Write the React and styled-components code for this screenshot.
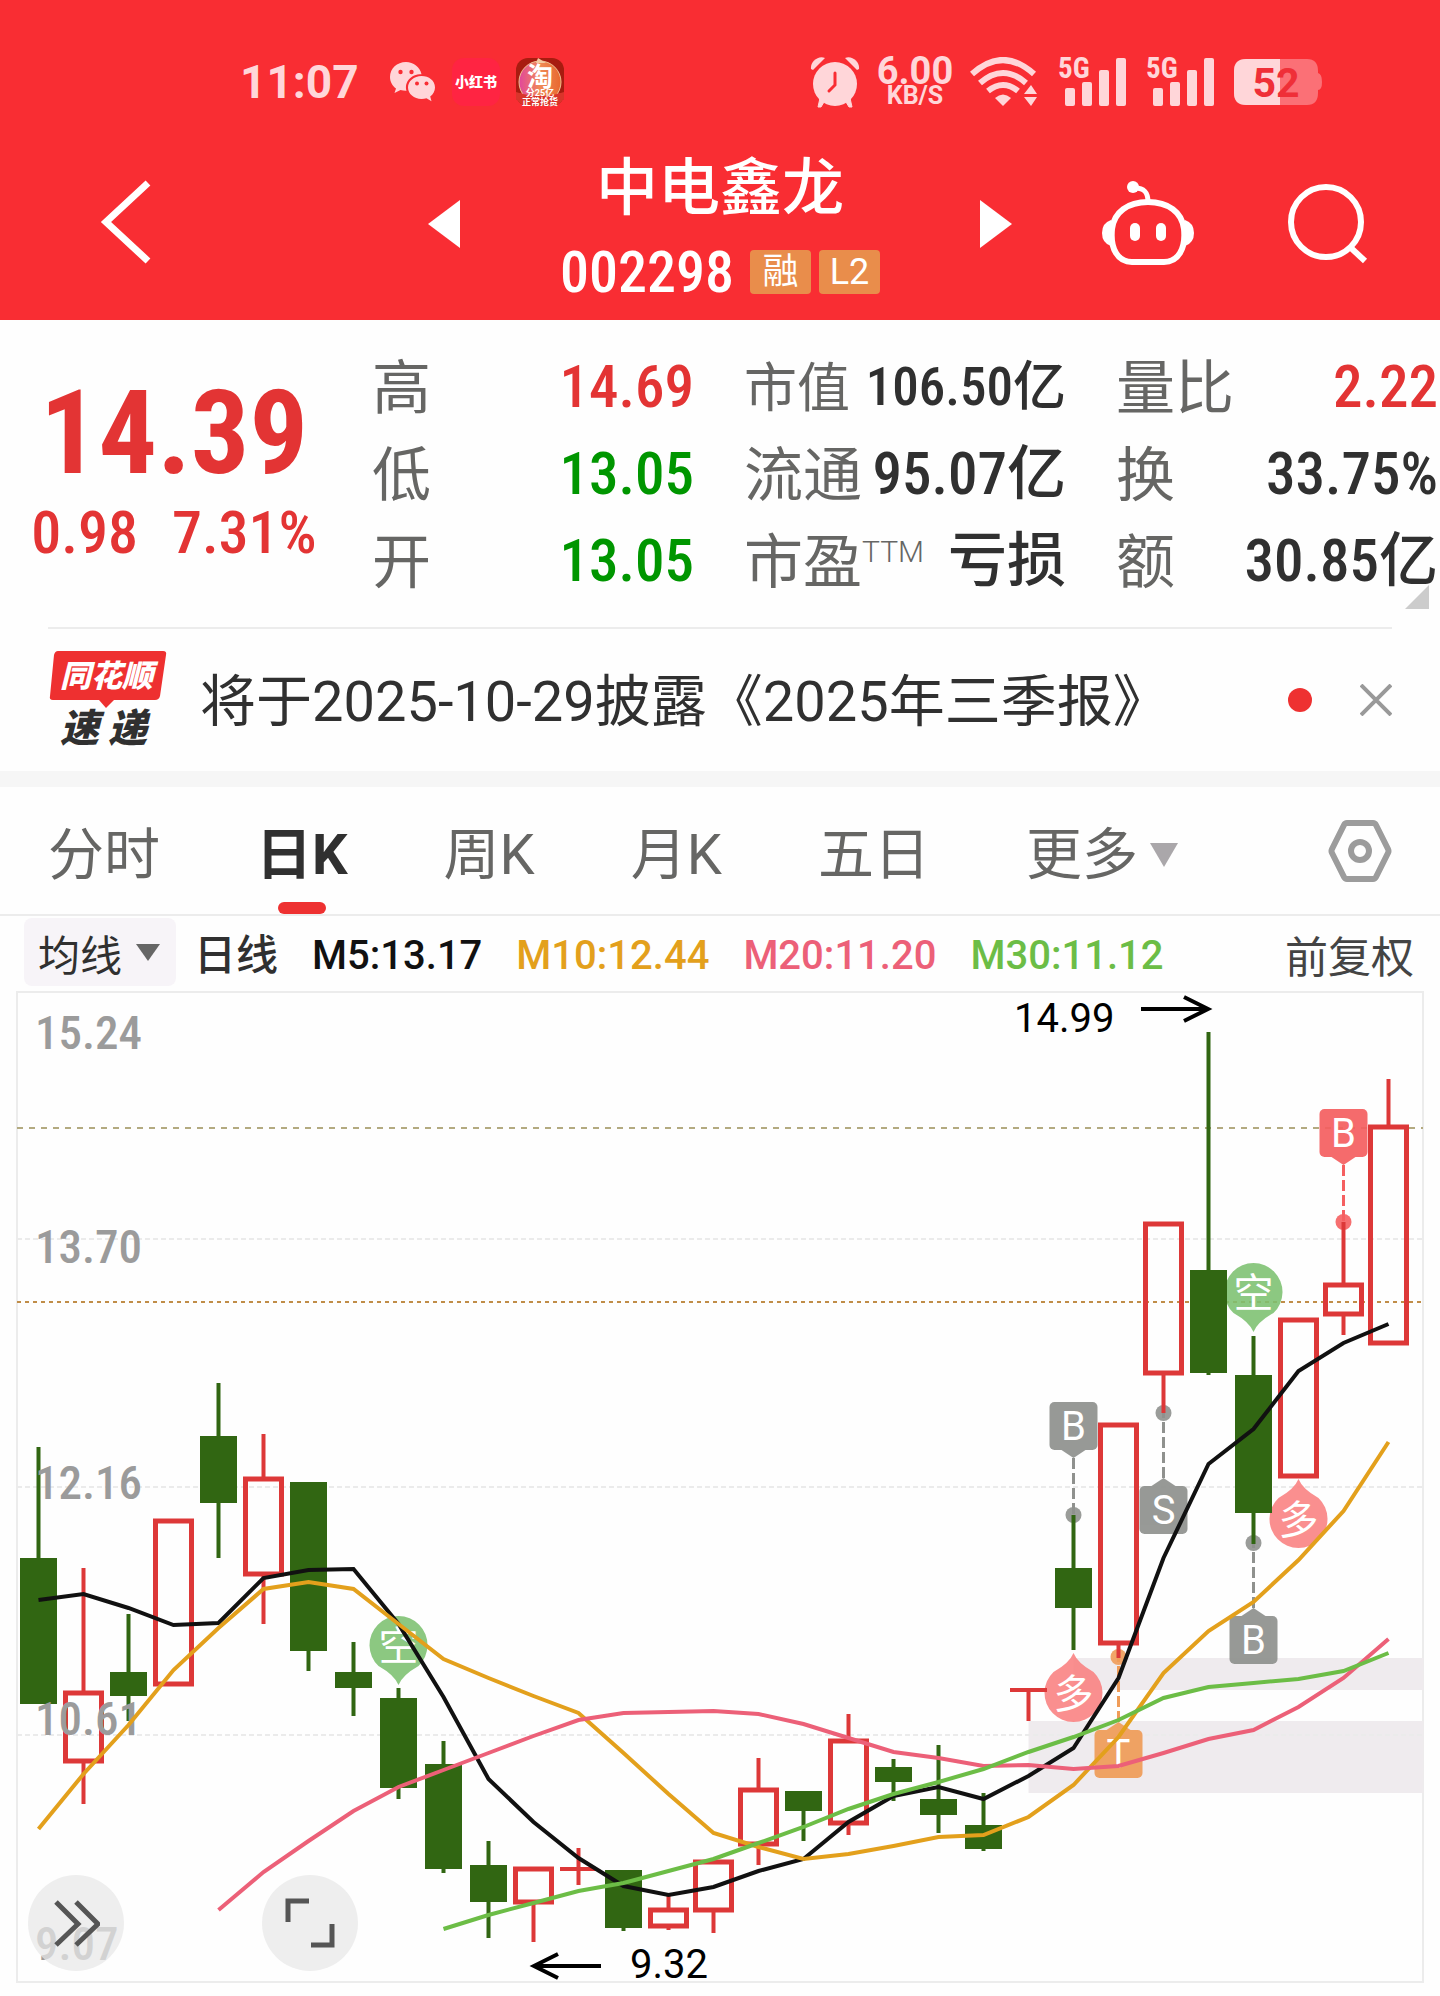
import { useState } from 'react';
import styled, { createGlobalStyle, ThemeProvider } from 'styled-components';

const theme = {
  colors: {
    header: '#f92d33',
    status: '#ffd6d9',
    red: '#e33434',
    green: '#009600',
    text: '#303030',
    label: '#666664',
    line: '#ececec',
    up: '#dd3838',
    down: '#316612',
    ma5: '#111111',
    ma10: '#e3a01c',
    ma20: '#ec6078',
    ma30: '#6cbd46',
  },
  fonts: {
    text: 'Roboto, "Noto Sans CJK SC", sans-serif',
    number: '"Roboto Condensed", Roboto, "Noto Sans CJK SC", sans-serif',
  },
};

const GlobalStyle = createGlobalStyle`
  * {
    box-sizing: border-box;
  }

  body {
    margin: 0;
    background: #fefefe;
    font-family: ${theme.fonts.text};
    color: ${theme.colors.text};
  }

  button {
    padding: 0;
    border: none;
    background: none;
    font-family: inherit;
    color: inherit;
    cursor: pointer;
  }

  svg {
    display: block;
    flex-shrink: 0;
  }
`;

/* ---------- header ---------- */

const Header = styled.header`
  padding: 56px 0 22px;
  background: ${props => props.theme.colors.header};
  color: white;
`;

const StatusBar = styled.div`
  display: flex;
  align-items: center;
  justify-content: space-between;
  height: 52px;
  padding: 0 118px 0 240px;
  color: ${props => props.theme.colors.status};
`;

const StatusGroup = styled.div`
  display: flex;
  align-items: center;
  gap: ${props => props.$gap}px;
`;

const Clock = styled.span`
  width: 134px;
  font-size: 46px;
  line-height: 52px;
  font-weight: 700;
`;

const AppBadge = styled.span`
  width: 48px;
  height: 48px;
  border-radius: 12px;
  background: #ff2442;
  color: white;
  font-size: 14px;
  line-height: 48px;
  font-weight: 900;
  text-align: center;
`;

const Speed = styled.div`
  display: flex;
  flex-direction: column;
  align-items: center;
  width: 80px;
  font-weight: 700;

  .value {
    font-size: 38px;
    line-height: 28px;
  }

  .unit {
    font-size: 25px;
    line-height: 22px;
  }
`;

const NavBar = styled.div`
  display: grid;
  grid-template-columns: 1fr auto 1fr;
  align-items: center;
  margin-top: 42px;
`;

const NavLeft = styled.div`
  display: flex;
  padding-left: 100px;
`;

const NavRight = styled.div`
  display: flex;
  align-items: center;
  justify-content: flex-end;
  gap: 94px;
  padding-right: 72px;
`;

const Switcher = styled.div`
  display: flex;
  align-items: center;
  justify-content: space-between;
  width: 584px;
`;

const StockTitle = styled.div`
  display: flex;
  flex-direction: column;
  align-items: center;
  gap: 20px;
  padding-bottom: 2px;

  h1 {
    margin: 0;
    font-size: 62px;
    line-height: 78px;
    font-weight: 500;
  }
`;

const CodeRow = styled.div`
  display: flex;
  align-items: center;
  gap: 8px;
  font-family: ${props => props.theme.fonts.number};
  font-size: 58px;
  line-height: 48px;
  font-weight: 500;
`;

const Code = styled.span`
  margin-right: 8px;
`;

const Tag = styled.span`
  width: 61px;
  height: 44px;
  border-radius: 4px;
  background: #e98d4b;
  font-family: ${props => props.theme.fonts.text};
  font-size: 36px;
  line-height: 44px;
  font-weight: 400;
  text-align: center;
`;

/* ---------- quote ---------- */

const Quote = styled.section`
  position: relative;
  display: grid;
  grid-template-columns: 322px 1fr 1fr 1fr;
  column-gap: 50px;
  padding: 23px 2px 23px 0;
  font-family: ${props => props.theme.fonts.number};
`;

const PriceBlock = styled.div`
  display: flex;
  flex-direction: column;
  align-items: center;
  padding: 32px 0 0 26px;
  color: ${props => props.theme.colors.red};
`;

const Price = styled.div`
  font-size: 116px;
  line-height: 116px;
  font-weight: 700;
`;

const Change = styled.div`
  display: flex;
  gap: 34px;
  font-size: 60px;
  line-height: 84px;
  font-weight: 500;
`;

const Stats = styled.dl`
  margin: 0;
`;

const Stat = styled.div`
  display: flex;
  align-items: center;
  justify-content: space-between;
  height: 87px;
  font-size: ${props => (props.$compact ? 53 : 59)}px;
  line-height: 84px;
  white-space: nowrap;

  dt {
    padding-top: 4px;
    color: ${props => props.theme.colors.label};
  }

  dd {
    margin: 0;
    font-weight: 500;
    color: ${props => props.theme.colors[props.$tone || 'text']};
  }

  sup {
    font-family: ${props => props.theme.fonts.text};
    font-size: 30px;
    line-height: 30px;
    font-weight: 300;
  }
`;

const Corner = styled.svg`
  position: absolute;
  right: 11px;
  bottom: 18px;
`;

/* ---------- news ---------- */

const News = styled.section`
  display: flex;
  align-items: center;
  height: 144px;
  margin: 0 48px;
  border-top: 2px solid ${props => props.theme.colors.line};
`;

const NewsLink = styled.a`
  flex: 1;
  margin-left: 32px;
  padding-top: 4px;
  font-size: 56px;
  line-height: 72px;
  color: ${props => props.theme.colors.text};
  text-decoration: none;
  white-space: nowrap;
`;

const Dot = styled.span`
  width: 24px;
  height: 24px;
  margin-right: 48px;
  border-radius: 50%;
  background: #ee3131;
`;

const Band = styled.div`
  height: 16px;
  background: #f6f6f6;
`;

/* ---------- tabs ---------- */

const Tabs = styled.nav`
  display: flex;
  align-items: stretch;
  gap: 96px;
  height: 129px;
  padding: 0 48px;
  border-bottom: 2px solid ${props => props.theme.colors.line};
`;

const Tab = styled.button`
  position: relative;
  display: flex;
  align-items: center;
  gap: 12px;
  padding-top: 8px;
  font-size: 56px;
  line-height: 64px;
  font-weight: ${props => (props.$active ? 700 : 400)};
  color: ${props => (props.$active ? props.theme.colors.text : props.theme.colors.label)};
  white-space: nowrap;

  &::after {
    content: '';
    position: absolute;
    left: 50%;
    bottom: 0;
    width: 48px;
    height: 12px;
    margin-left: -24px;
    border-radius: 6px;
    background: ${props => (props.$active ? '#ee3131' : 'transparent')};
  }
`;

const SettingsButton = styled.button`
  margin-left: auto;
`;

/* ---------- legend ---------- */

const Legend = styled.div`
  display: flex;
  align-items: center;
  gap: 34px;
  height: 72px;
  padding: 0 26px 0 24px;
  white-space: nowrap;
`;

const MaButton = styled.button`
  display: flex;
  align-items: center;
  gap: 14px;
  height: 68px;
  margin-right: -16px;
  padding: 0 16px 0 14px;
  border-radius: 8px;
  background: #f7f4f8;
  font-size: 42px;
`;

const Period = styled.span`
  padding-top: 8px;
  font-size: 42px;
  line-height: 60px;
  font-weight: 500;
`;

const MaValue = styled.span`
  padding-top: 8px;
  font-size: 40px;
  line-height: 60px;
  font-weight: 500;
  color: ${props => props.theme.colors[props.$tone]};
`;

const AdjustButton = styled.button`
  margin-left: auto;
  padding-top: 4px;
  font-size: 43px;
  color: #444;
`;

/* ---------- chart ---------- */

const ChartBox = styled.main`
  position: relative;
`;

const ChartSvg = styled.svg`
  width: 100%;
  height: auto;
  font-family: ${props => props.theme.fonts.text};
`;

const FloatButtons = styled.div`
  position: absolute;
  left: 28px;
  bottom: 25px;
  display: flex;
  gap: 138px;
`;

const FloatButton = styled.button`
  display: flex;
  align-items: center;
  justify-content: center;
  width: 96px;
  height: 96px;
  border-radius: 50%;
  background: rgba(232, 232, 232, 0.72);
`;

// [up, high, bodyTop, bodyBottom, low] in chart coordinates
const candles = [
  [0, 1447, 1558, 1704, 1704],
  [1, 1568, 1691, 1763, 1804],
  [0, 1614, 1672, 1696, 1721],
  [1, 1519, 1519, 1686, 1686],
  [0, 1383, 1436, 1503, 1558],
  [1, 1434, 1477, 1576, 1624],
  [0, 1482, 1482, 1651, 1671],
  [0, 1642, 1672, 1688, 1716],
  [0, 1688, 1698, 1788, 1799],
  [0, 1741, 1764, 1869, 1873],
  [0, 1841, 1865, 1902, 1938],
  [1, 1867, 1867, 1904, 1942],
  [1, 1848, 1867, 1871, 1885],
  [0, 1870, 1870, 1928, 1931],
  [1, 1896, 1908, 1928, 1930],
  [1, 1860, 1860, 1912, 1933],
  [1, 1758, 1788, 1846, 1865],
  [0, 1791, 1791, 1811, 1841],
  [1, 1714, 1739, 1825, 1835],
  [0, 1759, 1767, 1782, 1801],
  [0, 1745, 1799, 1815, 1833],
  [0, 1793, 1825, 1849, 1851],
  [1, 1688, 1688, 1692, 1721],
  [0, 1515, 1568, 1608, 1650],
  [1, 1423, 1423, 1645, 1658],
  [1, 1222, 1222, 1375, 1413],
  [0, 1032, 1270, 1373, 1375],
  [0, 1336, 1375, 1513, 1544],
  [1, 1318, 1318, 1478, 1478],
  [1, 1222, 1283, 1316, 1335],
  [1, 1079, 1125, 1345, 1345],
];

const averages = [
  {
    tone: 'ma5',
    start: 0,
    values: [
      1600, 1594, 1608, 1625, 1623, 1578, 1570, 1569, 1624, 1697, 1779, 1822, 1858, 1886, 1895, 1887,
      1871, 1859, 1822, 1796, 1787, 1799, 1776, 1748, 1678, 1558, 1464, 1429, 1371, 1343, 1324,
    ],
  },
  {
    tone: 'ma10',
    start: 0,
    values: [
      1829, 1774, 1725, 1670, 1628, 1589, 1582, 1589, 1624, 1659, 1678, 1696, 1713, 1753, 1794, 1833,
      1847, 1859, 1854, 1846, 1837, 1835, 1817, 1785, 1737, 1673, 1631, 1602, 1560, 1511, 1442,
    ],
  },
  {
    tone: 'ma20',
    start: 4,
    values: [
      1910, 1872, 1841, 1811, 1787, 1770, 1753, 1736, 1720, 1713, 1712, 1711, 1714, 1724, 1738, 1752,
      1758, 1766, 1765, 1769, 1766, 1753, 1739, 1730, 1707, 1678, 1639,
    ],
  },
  {
    tone: 'ma30',
    start: 9,
    values: [
      1929, 1915, 1903, 1891, 1883, 1871, 1859, 1843, 1827, 1809, 1794, 1782, 1769, 1752, 1737, 1720,
      1698, 1687, 1683, 1679, 1671, 1653,
    ],
  },
];

const priceLabels = [
  ['15.24', 1049],
  ['13.70', 1263],
  ['12.16', 1499],
  ['10.61', 1735],
  ['9.07', 1960],
];

const flags = [
  { letter: 'B', index: 23, dot: 1515, box: 1402, color: '#8f918e' },
  { letter: 'S', index: 25, dot: 1413, box: 1486, color: '#8f918e' },
  { letter: 'B', index: 27, dot: 1543, box: 1616, color: '#8f918e' },
  { letter: 'T', index: 24, dot: 1657, box: 1730, color: '#f09c58' },
  { letter: 'B', index: 29, dot: 1222, box: 1109, color: '#f55f60' },
];

const bubbles = [
  { text: '空', index: 8, y: 1645, up: false },
  { text: '空', index: 27, y: 1292, up: false },
  { text: '多', index: 23, y: 1693, up: true },
  { text: '多', index: 28, y: 1519, up: true },
];

const columnX = index => 38.5 + index * 45;

function Candle({ index, data }) {
  const [up, high, top, bottom, low] = data;
  const x = columnX(index);
  const color = up ? theme.colors.up : theme.colors.down;
  const hollow = up && bottom - top > 6;

  return (
    <g stroke={color} strokeWidth="4">
      {high < top && <path d={`M${x} ${high}V${top}`} />}
      {low > bottom && <path d={`M${x} ${bottom}V${low}`} />}
      {hollow ? (
        <rect x={x - 18} y={top + 2} width="36" height={bottom - top - 4} fill="none" strokeWidth="5" />
      ) : (
        <rect x={x - 18.5} y={top} width="37" height={bottom - top} fill={color} stroke="none" />
      )}
    </g>
  );
}

function Flag({ letter, index, dot, box, color }) {
  const x = columnX(index);
  const below = box > dot;
  const edge = below ? box : box + 48;
  const tip = below ? box - 8 : box + 56;

  return (
    <g>
      <path d={`M${x} ${tip}V${dot}`} stroke={color} strokeWidth="3" strokeDasharray="11 4" />
      <circle cx={x} cy={dot} r="8" fill={color} opacity="0.9" />
      <g fill={color} opacity="0.92">
        <rect x={x - 24} y={box} width="48" height="48" rx="5" />
        <path d={`M${x - 12} ${edge}L${x} ${tip}L${x + 12} ${edge}Z`} />
      </g>
      <text x={x} y={box + 38} textAnchor="middle" fontSize="40" fill="white">
        {letter}
      </text>
    </g>
  );
}

function Bubble({ text, index, y, up }) {
  const x = columnX(index);
  const dir = up ? -1 : 1;

  return (
    <g>
      <path
        fill={up ? '#f98080' : '#7cc070'}
        opacity="0.88"
        d={`M${x - 20} ${y + dir * 21}Q${x - 4} ${y + dir * 30} ${x} ${y + dir * 40}Q${x + 4} ${y + dir * 30} ${x + 20} ${y + dir * 21}A29 29 0 1 ${up ? 1 : 0} ${x - 20} ${y + dir * 21}Z`}
      />
      <text x={x} y={y + 15} textAnchor="middle" fontSize="40" fill="white">
        {text}
      </text>
    </g>
  );
}

function KLineChart() {
  return (
    <ChartSvg viewBox="0 988 1440 1008" role="img" aria-label="日K">
      <rect x="17" y="992" width="1406" height="990" fill="none" stroke="#ececec" strokeWidth="2" />
      <rect x="1073.5" y="1658" width="350" height="32" fill="#efebee" />
      <rect x="1028.5" y="1721" width="395" height="72" fill="#efebee" />
      <g stroke="#ebebeb" strokeWidth="2" strokeDasharray="5 3">
        <path d="M17 1239H1423" />
        <path d="M17 1487H1423" />
        <path d="M17 1735H1423" />
      </g>
      <path d="M17 1128H1423" stroke="#b3aa80" strokeWidth="2" strokeDasharray="6 6" />
      <path d="M17 1302H1423" stroke="#c08d48" strokeWidth="2" strokeDasharray="4 4" />

      {flags.map(flag => (
        <Flag key={flag.index} {...flag} />
      ))}
      {bubbles.map(bubble => (
        <Bubble key={bubble.index} {...bubble} />
      ))}
      {candles.map((data, index) => (
        <Candle key={index} index={index} data={data} />
      ))}

      <g fontFamily={theme.fonts.number} fontSize="47" fontWeight="500" fill="#9b9b9b">
        {priceLabels.map(([label, y]) => (
          <text key={label} x="35" y={y}>
            {label}
          </text>
        ))}
      </g>

      {averages.map(({ tone, start, values }) => (
        <polyline
          key={tone}
          points={values.map((y, i) => `${columnX(start + i)},${y}`).join(' ')}
          fill="none"
          stroke={theme.colors[tone]}
          strokeWidth="4"
        />
      ))}

      <g fontSize="40" fill="black">
        <text x="1014" y="1032">14.99</text>
        <text x="630" y="1978">9.32</text>
      </g>
      <g fill="none" stroke="black" strokeWidth="4">
        <path d="M1141 1009H1208M1184 997L1208 1009L1184 1021" />
        <path d="M601 1966H534M558 1954L534 1966L558 1978" />
      </g>
    </ChartSvg>
  );
}

/* ---------- icons ---------- */

function WechatIcon() {
  return (
    <svg width="46" height="40" viewBox="0 0 46 40" fill="currentColor">
      <path d="M16 0C7 0 0 6.500 0 15c0 5 2.400 8.800 6 11.500L4.500 31l6-3c2 .600 4 .900 6 .800C14 20 21 12 31.500 12.200 30 5 23.500 0 16 0Z" />
      <path d="M45 25.500C45 18.500 39 14 31.500 14S18 19.200 18 25.500 24 37 31.500 37c1.800 0 3.400-.3 5-.8l5 3-1.300-4.700c3-2.200 4.800-5.400 4.800-9Z" />
      <g fill={theme.colors.header}>
        <circle cx="10.500" cy="10" r="2.200" />
        <circle cx="21.500" cy="10" r="2.200" />
        <circle cx="27" cy="21.500" r="2" />
        <circle cx="36.500" cy="21.500" r="2" />
      </g>
    </svg>
  );
}

function TaobaoIcon() {
  return (
    <svg width="48" height="60" viewBox="0 -6 48 60" fontWeight="700" textAnchor="middle" fill="white">
      <defs>
        <linearGradient id="tao" x1="0" y1="0" x2="1" y2="0">
          <stop offset="0" stopColor="#e2469c" />
          <stop offset="0.5" stopColor="#f08a55" />
          <stop offset="1" stopColor="#e8682e" />
        </linearGradient>
      </defs>
      <rect width="48" height="48" rx="12" fill="#a81c10" />
      <path d="M0 35H48V36A12 12 0 0 1 36 48H12A12 12 0 0 1 0 36Z" fill="#d9352b" />
      <circle cx="24" cy="24" r="21" fill="url(#tao)" stroke="#f0c090" strokeWidth="1" />
      <path d="M20 5L22 0L30 5Z" fill="#f5c9a0" />
      <path d="M0 34Q24 42 48 34V42Q24 38 0 42Z" fill="#d9352b" />
      <path d="M3 40Q24 36 45 40L42 46Q24 48 6 46Z" fill="#d9352b" />
      <text x="24" y="28" fontSize="26">淘</text>
      <text x="24" y="38" fontSize="9">分25亿</text>
      <text x="24" y="47" fontSize="9">正常抢货</text>
    </svg>
  );
}

function AlarmIcon() {
  return (
    <svg width="50" height="52" viewBox="0 0 50 52" fill="currentColor">
      <circle cx="25" cy="28" r="22" />
      <path d="M1 13C0 6 8-1 15 2L3 14Z" />
      <path d="M49 13C50 6 42-1 35 2L47 14Z" />
      <path d="M10 42L14 46L11 51H8Z M40 42L36 46L39 51H42Z" stroke="currentColor" />
      <path d="M25 17V29L19 35" fill="none" stroke={theme.colors.header} strokeWidth="3" strokeLinecap="round" />
    </svg>
  );
}

function WifiIcon() {
  return (
    <svg width="68" height="50" viewBox="0 0 68 50">
      <g fill="none" stroke="currentColor" strokeWidth="6">
        <path d="M2 17Q33-11 64 17" />
        <path d="M10 26Q33 6 56 26" />
        <path d="M18 34Q33 22 48 34" />
      </g>
      <path d="M25 41Q33 34 41 41L33 49Z" fill="currentColor" />
      <path d="M61 28L67 37H54Z M54 40H67L61 49Z" fill="currentColor" />
    </svg>
  );
}

function SignalIcon() {
  return (
    <svg width="68" height="66" viewBox="0 -8 68 66" fill="currentColor">
      <text x="0" y="21" fontFamily={theme.fonts.number} fontSize="29" fontWeight="700">5G</text>
      <rect x="7" y="31" width="10" height="18" rx="2" />
      <rect x="24" y="25" width="10" height="24" rx="2" />
      <rect x="41" y="13" width="10" height="36" rx="2" />
      <rect x="58" y="1" width="10" height="48" rx="2" />
    </svg>
  );
}

function BatteryIcon() {
  return (
    <svg width="88" height="58" viewBox="0 -6 88 58">
      <path d="M12 0H73Q84 0 84 12V14Q88 15 88 23T84 31V34Q84 46 73 46H12Q0 46 0 34V12Q0 0 12 0Z" fill="#fb7076" />
      <path d="M12 0H46V46H12Q0 46 0 34V12Q0 0 12 0Z" fill="currentColor" />
      <text x="42" y="38" textAnchor="middle" fontSize="41" fontWeight="700" fill="#ef2f38">52</text>
    </svg>
  );
}

function RobotIcon() {
  return (
    <svg width="92" height="86" viewBox="0 0 92 86" fill="none" stroke="white" strokeWidth="6">
      <path d="M46 21C66 21 80 31 82 48C84 68 76 81 62 81H30C16 81 8 68 10 48C12 31 26 21 46 21Z" />
      <path d="M46 21C46 12 43 7 33 7" strokeWidth="5" />
      <circle cx="31" cy="6" r="6" fill="white" stroke="none" />
      <path d="M9 39Q0 42 0 52T9 65Z M83 39Q92 42 92 52T83 65Z" fill="white" stroke="none" />
      <rect x="28" y="42" width="10" height="18" rx="5" fill="white" stroke="none" />
      <rect x="54" y="42" width="10" height="18" rx="5" fill="white" stroke="none" />
    </svg>
  );
}

function ExpressLogo() {
  return (
    <svg width="120" height="110" viewBox="0 -5 120 110" fontWeight="900" fontStyle="italic">
      <path d="M10 1H115Q119 1 118 5L112 46Q111 50 107 50H66L58 58L51 50H5Q1 50 2 46L6 5Q7 1 10 1Z" fill="#ee3030" />
      <text x="12" y="37" fontSize="31" fill="white">同花顺</text>
      <text x="12" y="92" fontSize="39" fill="#303030">速</text>
      <text x="60" y="92" fontSize="39" fill="#303030">递</text>
    </svg>
  );
}

function Triangle({ width, height, color }) {
  return (
    <svg width={width} height={height} viewBox="0 0 10 10" preserveAspectRatio="none">
      <path d="M0 0H10L5 10Z" fill={color} />
    </svg>
  );
}

/* ---------- page ---------- */

const quoteColumns = [
  [
    { label: '高', value: '14.69', tone: 'red' },
    { label: '低', value: '13.05', tone: 'green' },
    { label: '开', value: '13.05', tone: 'green' },
  ],
  [
    { label: '市值', value: '106.50亿', compact: true },
    { label: '流通', value: '95.07亿' },
    { label: '市盈', sup: 'TTM', value: '亏损' },
  ],
  [
    { label: '量比', value: '2.22', tone: 'red' },
    { label: '换', value: '33.75%' },
    { label: '额', value: '30.85亿' },
  ],
];

const tabs = ['分时', '日K', '周K', '月K', '五日', '更多'];

export default function App() {
  const [activeTab, setActiveTab] = useState('日K');

  return (
    <ThemeProvider theme={theme}>
      <GlobalStyle />
      <Header>
        <StatusBar>
          <StatusGroup $gap={16}>
            <Clock>11:07</Clock>
            <WechatIcon />
            <AppBadge>小红书</AppBadge>
            <TaobaoIcon />
          </StatusGroup>
          <StatusGroup $gap={20}>
            <StatusGroup $gap={15}>
              <AlarmIcon />
              <Speed>
                <span className="value">6.00</span>
                <span className="unit">KB/S</span>
              </Speed>
              <WifiIcon />
            </StatusGroup>
            <SignalIcon />
            <SignalIcon />
            <BatteryIcon />
          </StatusGroup>
        </StatusBar>

        <NavBar>
          <NavLeft>
            <button aria-label="返回">
              <svg width="52" height="88" viewBox="0 0 52 88">
                <path d="M48 3L6 42L48 81" fill="none" stroke="white" strokeWidth="7" />
              </svg>
            </button>
          </NavLeft>
          <Switcher>
            <button aria-label="上一只">
              <svg width="32" height="48" viewBox="0 0 32 48">
                <path d="M32 0V48L0 24Z" fill="white" />
              </svg>
            </button>
            <StockTitle>
              <h1>中电鑫龙</h1>
              <CodeRow>
                <Code>002298</Code>
                <Tag>融</Tag>
                <Tag>L2</Tag>
              </CodeRow>
            </StockTitle>
            <button aria-label="下一只">
              <svg width="32" height="48" viewBox="0 0 32 48">
                <path d="M0 0V48L32 24Z" fill="white" />
              </svg>
            </button>
          </Switcher>
          <NavRight>
            <button aria-label="助手">
              <RobotIcon />
            </button>
            <button aria-label="搜索">
              <svg width="80" height="82" viewBox="0 0 80 82" fill="none" stroke="white" strokeWidth="6">
                <circle cx="38" cy="39" r="35" />
                <path d="M63 65L77 78" />
              </svg>
            </button>
          </NavRight>
        </NavBar>
      </Header>

      <Quote>
        <PriceBlock>
          <Price>14.39</Price>
          <Change>
            <span>0.98</span>
            <span>7.31%</span>
          </Change>
        </PriceBlock>
        {quoteColumns.map((column, i) => (
          <Stats key={i}>
            {column.map(item => (
              <Stat key={item.label} $tone={item.tone} $compact={item.compact}>
                <dt>
                  {item.label}
                  {item.sup && <sup>{item.sup}</sup>}
                </dt>
                <dd>{item.value}</dd>
              </Stat>
            ))}
          </Stats>
        ))}
        <Corner width="24" height="24" viewBox="0 0 24 24">
          <path d="M24 0V24H0Z" fill="#cccccc" />
        </Corner>
      </Quote>

      <News>
        <ExpressLogo />
        <NewsLink href="#report">将于2025-10-29披露《2025年三季报》</NewsLink>
        <Dot />
        <button aria-label="关闭">
          <svg width="32" height="32" viewBox="0 0 32 32">
            <path d="M1 1L31 31M31 1L1 31" stroke="#999" strokeWidth="4" />
          </svg>
        </button>
      </News>
      <Band />

      <Tabs>
        {tabs.map(tab => (
          <Tab key={tab} $active={tab === activeTab} onClick={() => setActiveTab(tab)}>
            {tab}
            {tab === '更多' && <Triangle width="28" height="24" color="#aaa7aa" />}
          </Tab>
        ))}
        <SettingsButton aria-label="设置">
          <svg width="64" height="62" viewBox="0 0 64 62" fill="none" stroke="#9c9c9c" strokeWidth="6">
            <path d="M19 3H45Q47 3 48 5L60 29Q61 31 60 33L48 57Q47 59 45 59H19Q17 59 16 57L4 33Q3 31 4 29L16 5Q17 3 19 3Z" />
            <circle cx="32" cy="31" r="9" />
          </svg>
        </SettingsButton>
      </Tabs>

      <Legend>
        <MaButton>
          均线
          <Triangle width="24" height="17" color="#666" />
        </MaButton>
        <Period>日线</Period>
        <MaValue $tone="ma5">M5:13.17</MaValue>
        <MaValue $tone="ma10">M10:12.44</MaValue>
        <MaValue $tone="ma20">M20:11.20</MaValue>
        <MaValue $tone="ma30">M30:11.12</MaValue>
        <AdjustButton>前复权</AdjustButton>
      </Legend>

      <ChartBox>
        <KLineChart />
        <FloatButtons>
          <FloatButton aria-label="展开">
            <svg width="48" height="48" viewBox="0 0 48 48" fill="none" stroke="#555" strokeWidth="5">
              <path d="M4 3L26 25L4 46M24 3L46 25L24 46" />
            </svg>
          </FloatButton>
          <FloatButton aria-label="全屏">
            <svg width="50" height="50" viewBox="0 0 50 50" fill="none" stroke="#555" strokeWidth="5">
              <path d="M3 24V3H24M47 26V47H26" />
            </svg>
          </FloatButton>
        </FloatButtons>
      </ChartBox>
    </ThemeProvider>
  );
}
